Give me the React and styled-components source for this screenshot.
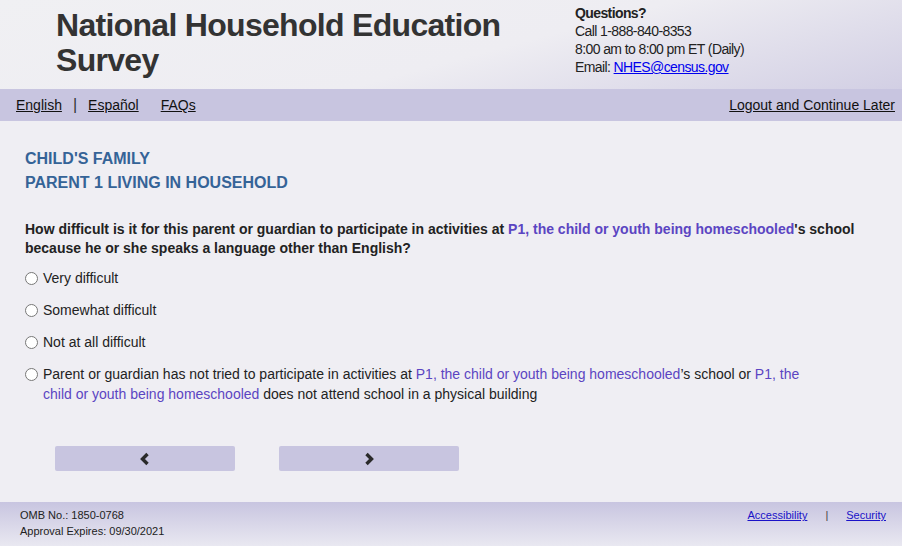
import React from "react";
import styled, { createGlobalStyle } from "styled-components";

const GlobalStyle = createGlobalStyle`
  html, body {
    margin: 0;
    padding: 0;
    background: #efeef3;
  }
  body {
    font-family: "Liberation Sans", Arial, sans-serif;
    color: #222;
  }
`;

const Page = styled.div`
  width: 902px;
  min-height: 546px;
  display: flex;
  flex-direction: column;
  background: #efeef3;
`;

const Header = styled.header`
  height: 89px;
  display: flex;
  justify-content: space-between;
  background: linear-gradient(165deg, #f0f0f3 0%, #eeedf2 55%, #d2cfe4 100%);
  .title {
    margin: 8px 0 0 56px;
    font-family: "Liberation Sans Narrow", "Arial Narrow", "Liberation Sans", sans-serif;
    font-size: 32px;
    font-weight: 700;
    letter-spacing: -0.7px;
    line-height: 35px;
    color: #333;
    width: 470px;
  }
  .contact {
    width: 327px;
    padding-top: 4px;
    font-family: "Liberation Sans Narrow", "Arial Narrow", "Liberation Sans", sans-serif;
    font-size: 14px;
    letter-spacing: -0.6px;
    line-height: 18px;
    color: #222;
    strong {
      font-weight: 700;
    }
    a {
      color: #0000ee;
      text-decoration: underline;
    }
  }
`;

const NavBar = styled.nav`
  height: 32px;
  background: #c8c5e0;
  display: flex;
  align-items: center;
  justify-content: space-between;
  padding: 0 7px 0 16px;
  font-size: 14px;
  a {
    color: #111;
    text-decoration: underline;
  }
  .left {
    display: flex;
    align-items: center;
  }
  .sep {
    margin: 0 11px 0 11px;
    color: #333;
    font-size: 16px;
  }
  .faq {
    margin-left: 22px;
  }
`;

const Main = styled.main`
  flex: 1;
  padding: 26px 25px 30px 25px;
`;

const SectionTitle = styled.h2`
  margin: 0;
  font-size: 16px;
  line-height: 24px;
  font-weight: 700;
  color: #356397;
`;

const Question = styled.p`
  margin: 25px 0 7px;
  font-size: 14px;
  font-weight: 700;
  line-height: 19px;
  color: #222;
`;

const Fill = styled.span`
  color: #5b45c2;
`;

const Option = styled.label`
  display: flex;
  align-items: flex-start;
  gap: 5px;
  font-size: 14px;
  line-height: 20px;
  padding: 3px 0 9px;
  max-width: 780px;
  input {
    margin: 4px 0 0;
    width: 13px;
    height: 13px;
    flex-shrink: 0;
  }
`;

const Buttons = styled.div`
  display: flex;
  gap: 44px;
  padding: 33px 0 0 30px;
`;

const NavButton = styled.button`
  width: 180px;
  height: 25px;
  border: none;
  border-radius: 2px;
  background: #c8c5e0;
  display: flex;
  align-items: center;
  justify-content: center;
  cursor: pointer;
`;

const Footer = styled.footer`
  height: 44px;
  background: linear-gradient(180deg, #c8c5e0 0%, #e9e8f1 100%);
  display: flex;
  justify-content: space-between;
  padding: 0 16px 0 20px;
  font-size: 11px;
  line-height: 16px;
  color: #222;
  .info {
    padding-top: 5px;
  }
  .links {
    padding-top: 5px;
    a {
      color: #1a12c8;
      text-decoration: underline;
    }
    .sep {
      margin: 0 18px;
      color: #444;
    }
  }
`;

const Chevron = ({ dir }) => (
  <svg width="12" height="14" viewBox="0 0 12 14">
    <path
      d={dir === "left" ? "M8.5 2 L3.5 7 L8.5 12" : "M3.5 2 L8.5 7 L3.5 12"}
      fill="none"
      stroke="#2a2a2a"
      strokeWidth="3.4"
    />
  </svg>
);

const P1 = () => <Fill>P1, the child or youth being homeschooled</Fill>;

const options = [
  "Very difficult",
  "Somewhat difficult",
  "Not at all difficult",
];

const App = () => {
  return (
    <Page>
      <GlobalStyle />
      <Header>
        <div className="title">National Household Education Survey</div>
        <div className="contact">
          <strong>Questions?</strong>
          <br />
          Call 1-888-840-8353
          <br />
          8:00 am to 8:00 pm ET (Daily)
          <br />
          Email: <a href="#">NHES@census.gov</a>
        </div>
      </Header>
      <NavBar>
        <div className="left">
          <a href="#">English</a>
          <span className="sep">|</span>
          <a href="#">Español</a>
          <a href="#" className="faq">FAQs</a>
        </div>
        <a href="#">Logout and Continue Later</a>
      </NavBar>
      <Main>
        <SectionTitle>CHILD'S FAMILY</SectionTitle>
        <SectionTitle>PARENT 1 LIVING IN HOUSEHOLD</SectionTitle>
        <Question>
          How difficult is it for this parent or guardian to participate in
          activities at <P1 />'s school because he or she speaks a language
          other than English?
        </Question>
        {options.map(o => (
          <Option key={o}>
            <input type="radio" name="q" />
            <span>{o}</span>
          </Option>
        ))}
        <Option>
          <input type="radio" name="q" />
          <span>
            Parent or guardian has not tried to participate in activities at{" "}
            <P1 />’s school or <P1 /> does not attend school in a physical
            building
          </span>
        </Option>
        <Buttons>
          <NavButton aria-label="Previous">
            <Chevron dir="left" />
          </NavButton>
          <NavButton aria-label="Next">
            <Chevron dir="right" />
          </NavButton>
        </Buttons>
      </Main>
      <Footer>
        <div className="info">
          OMB No.: 1850-0768
          <br />
          Approval Expires: 09/30/2021
        </div>
        <div className="links">
          <a href="#">Accessibility</a>
          <span className="sep">|</span>
          <a href="#">Security</a>
        </div>
      </Footer>
    </Page>
  );
};

export default App;
